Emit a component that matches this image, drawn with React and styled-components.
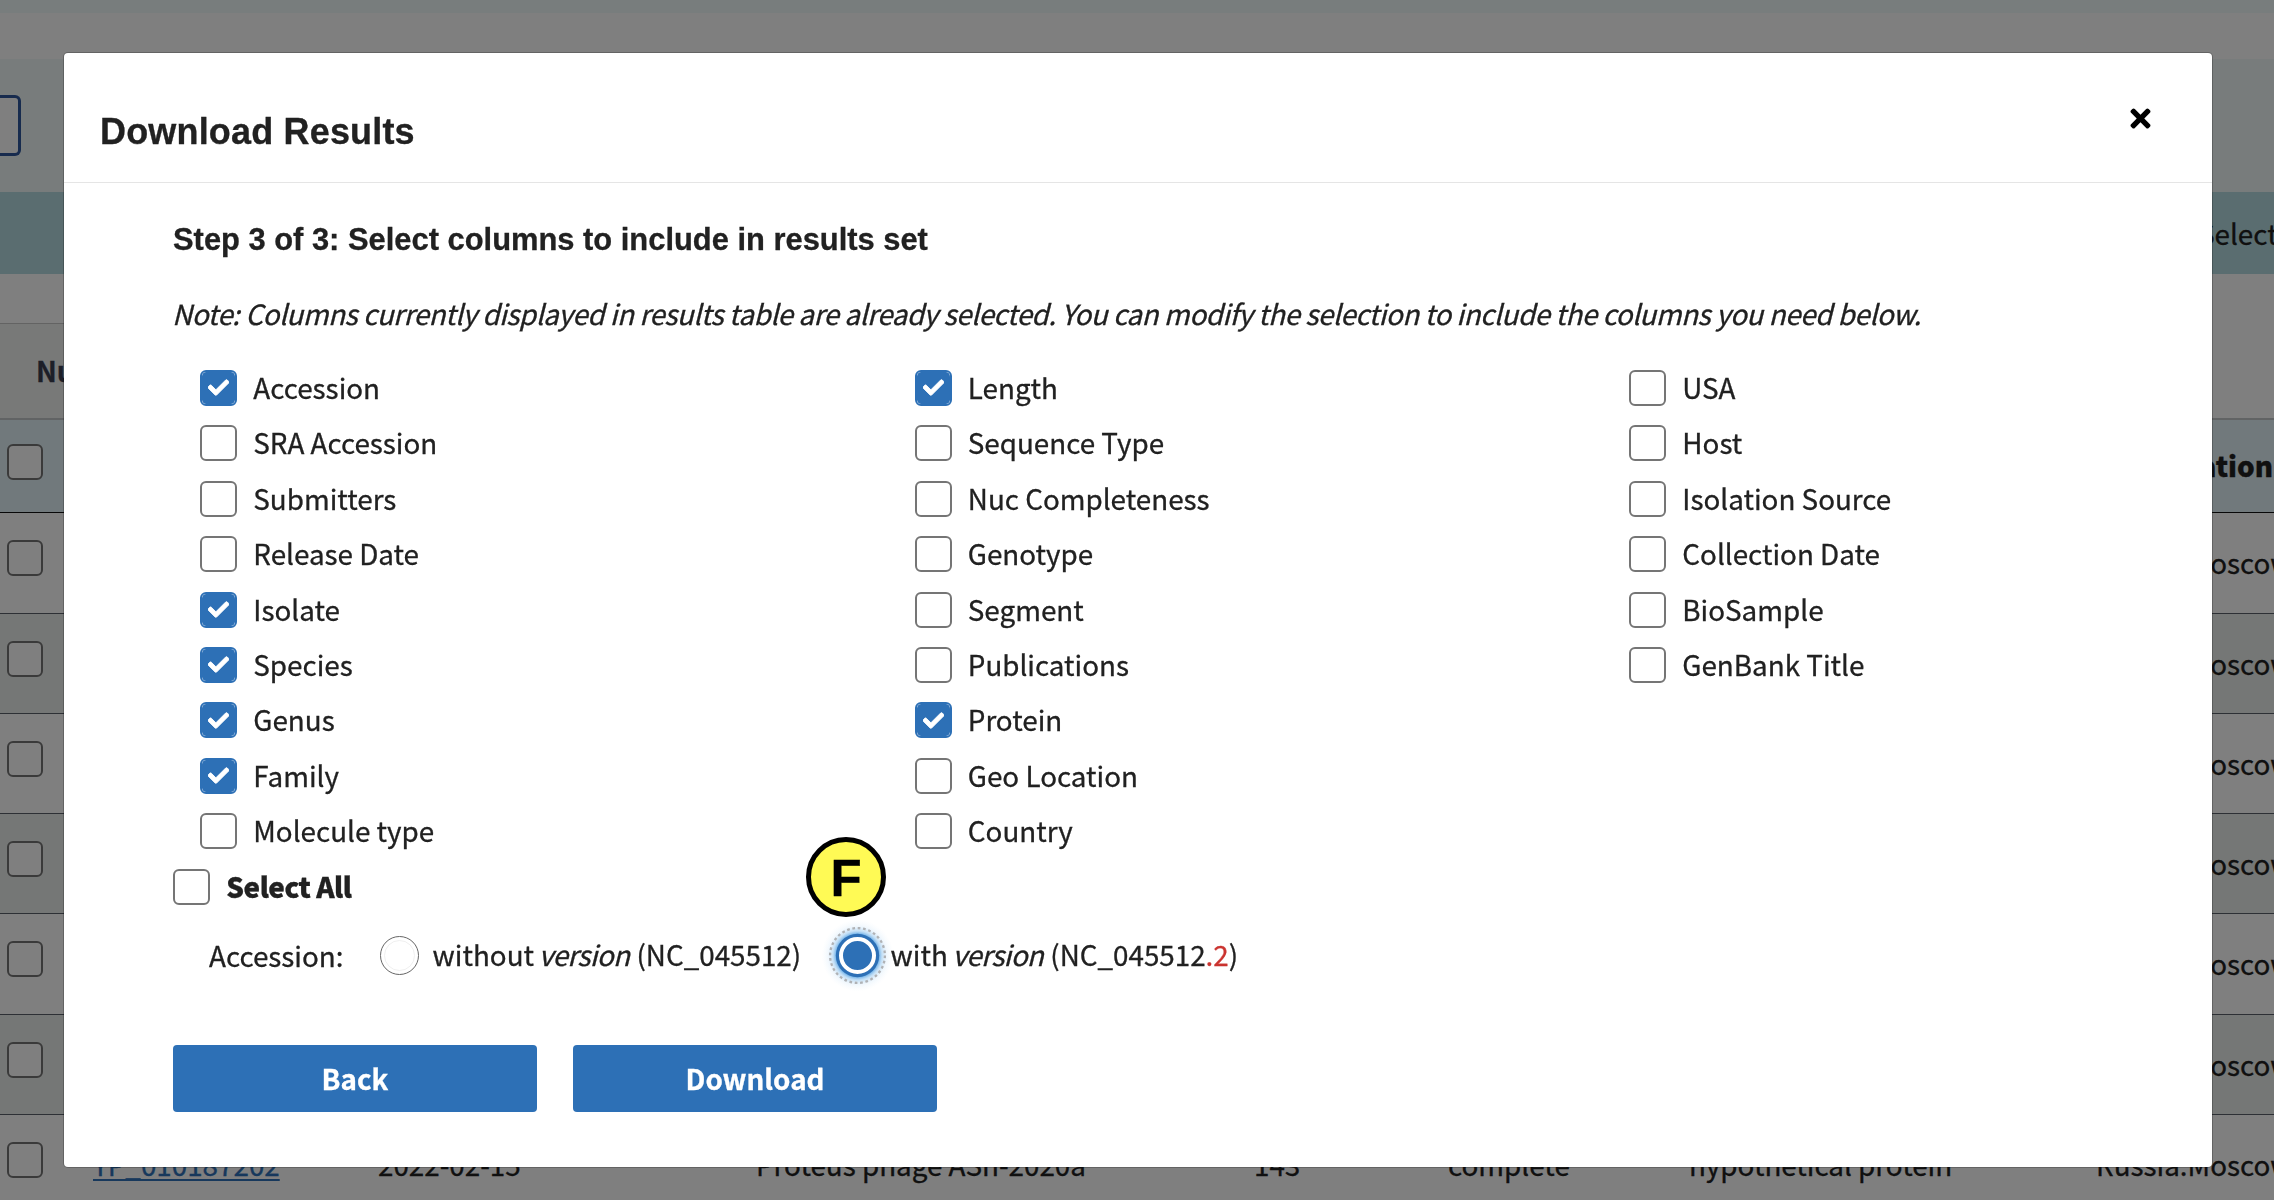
import React, { useState } from 'react';
import styled, { createGlobalStyle, css } from 'styled-components';
import { FaCheck, FaTimes } from 'react-icons/fa';

const blue = '#2d70b6';
const ink = '#212121';
const body = '"Source Sans Pro", "Noto Sans CJK SC", "Noto Sans", sans-serif';
const heading = 'Helvetica, "Liberation Sans", Arial, sans-serif';

const GlobalStyle = createGlobalStyle`
  *, *::before, *::after { box-sizing: border-box; }
  body {
    margin: 0;
    overflow: hidden;
    background: #fff;
    color: ${ink};
    font-family: ${body};
    font-size: 27.8px;
    line-height: 40px;
    -webkit-text-stroke: 0.3px;
  }
  h1, h2, p { margin: 0; }
  button { font: inherit; border: 0; padding: 0; cursor: pointer; }
`;

/* ---------- Page behind the dialog ---------- */

const Page = styled.div`
  display: flex;
  flex-direction: column;
  width: 2274px;
  height: 1200px;
  overflow: hidden;
`;

const Banner = styled.div`
  flex: none;
  height: 13px;
  margin-bottom: 46px;
  background: #f1fafa;
`;

const SearchStrip = styled.div`
  flex: none;
  display: flex;
  align-items: flex-start;
  height: 133px;
  padding-top: 36px;
  background: #f1f9f9;
`;

const SearchField = styled.div`
  width: 21px;
  height: 61px;
  background: #fff;
  border: 3px solid #2e569c;
  border-left: 0;
  border-radius: 0 6px 6px 0;
`;

const ActionBar = styled.div`
  flex: none;
  display: flex;
  justify-content: flex-end;
  height: 82px;
  margin-bottom: 49px;
  padding: 21px 0 0;
  background: #b5dae0;
  white-space: nowrap;
`;

const ActionLabel = styled.span`
  width: 76px;
`;

const TabBar = styled.div`
  flex: none;
  display: flex;
  height: 97px;
  border-bottom: 2px solid #c3c6c8;
`;

const Tab = styled.div`
  width: 360px;
  padding: 26px 0 0 36px;
  border-top: 1px solid #c6c6c6;
  background: #f0f2f0;
  color: #3b3f50;
  font-weight: 700;
`;

const Row = styled.div`
  flex: none;
  display: grid;
  grid-template-columns: 93px 286px 378px 498px 194px 241px 407px 177px;
  height: 100.25px;
  padding-top: 29px;
  border-bottom: 1px solid #5b616b;
  background: ${(p) => (p.$striped ? '#ebefec' : '#fff')};
  white-space: nowrap;
  ${(p) =>
    p.$head &&
    css`
      height: 93.3px;
      padding-top: 24px;
      border-bottom-color: #111;
      background: #e3f2f8;
      font-weight: 900;
    `}
`;

const RowCheck = styled.span`
  display: block;
  width: 36px;
  height: 36px;
  margin: ${(p) => (p.$head ? '0' : '-2px')} 0 0 7px;
  border: 2px solid #757575;
  border-radius: 6px;
  background: #fff;
`;

const Cell = styled.span`
  grid-column: ${(p) => p.$col};
  margin-left: -1px;
`;

const HeadCell = styled.span`
  grid-column: 7 / 9;
  margin-top: 1px;
  padding-right: 1px;
  text-align: right;
`;

const Link = styled.a`
  grid-column: 2;
  color: #2e71b8;
  text-decoration: underline;
  text-decoration-thickness: 2px;
  text-underline-offset: 3px;
`;

/* ---------- Dialog ---------- */

const Overlay = styled.div`
  position: fixed;
  inset: 0;
  display: flex;
  align-items: flex-start;
  padding: 53px 0 0 64px;
  background: rgba(0, 0, 0, 0.5);
`;

const Dialog = styled.section`
  position: relative;
  width: 2148px;
  height: 1114px;
  border-radius: 4px;
  background: #fff;
  box-shadow: 0 0 0 1px rgba(0, 0, 0, 0.22);
`;

const DialogHeader = styled.header`
  display: flex;
  justify-content: space-between;
  height: 130px;
  padding: 57px 57px 0 36px;
  border-bottom: 1px solid #e5e5e5;
`;

const Title = styled.h1`
  padding-top: 1px;
  font: 700 36px/42px ${heading};
  letter-spacing: 0.17px;
`;

const CloseButton = styled.button`
  display: flex;
  width: 29px;
  height: 29px;
  margin-top: -6px;
  background: none;
  color: #000;
  font-size: 29px;
`;

const DialogBody = styled.div`
  padding: 39px 109px 0;
`;

const StepTitle = styled.h2`
  font: 700 30.88px/36px ${heading};
`;

const Note = styled.p`
  margin: 35px 0 0 -1px;
  font-style: italic;
  letter-spacing: -0.44px;
  white-space: nowrap;
`;

const Columns = styled.div`
  display: grid;
  grid-template-columns: repeat(3, 714.5px);
  margin-top: 26.3px;
  padding-left: 27px;
`;

const Column = styled.div`
  display: flex;
  flex-direction: column;
`;

const Option = styled.label`
  display: flex;
  align-items: center;
  height: 55.4px;
  gap: 16.3px;
  white-space: nowrap;
  ${(p) =>
    p.$strong &&
    css`
      font-weight: 900;
      letter-spacing: -0.5px;
    `}
`;

const Box = styled.span`
  flex: none;
  display: flex;
  width: 37px;
  height: 36px;
  margin-top: 2px;
  border: 2px solid ${(p) => (p.$on ? blue : '#757575')};
  border-radius: 6px;
  background: #fff;
  color: #fff;
  font-size: 21px;
  & svg path {
    stroke: #fff;
    stroke-width: 22px;
    stroke-linejoin: round;
  }
`;

const BoxFill = styled.span`
  flex: 1;
  display: flex;
  align-items: center;
  justify-content: center;
  border-radius: 4.4px;
  background: ${blue};
`;

const VersionRow = styled.div`
  display: flex;
  align-items: center;
  height: 85.4px;
  padding-left: 36px;
  white-space: nowrap;
`;

const VersionLabel = styled.span`
  width: 171px;
  padding-bottom: 1px;
`;

const VersionText = styled.span`
  width: ${(p) => p.$width}px;
  margin-left: ${(p) => p.$gap}px;
  padding-bottom: 3px;
`;

const Em = styled.em`
  margin-left: -1.5px;
  margin-right: 0.8px;
  letter-spacing: -0.6px;
`;

const Suffix = styled.span`
  color: #cb3430;
`;

const Radio = styled.svg`
  flex: none;
  width: 39px;
  height: 39px;
  overflow: visible;
`;

const Actions = styled.div`
  display: flex;
  gap: 36px;
  margin-top: 46.3px;
`;

const ActionButton = styled.button`
  width: 364px;
  height: 67px;
  border-radius: 4px;
  background: ${blue};
  color: #fff;
  font-weight: 700;
`;

const Badge = styled.span`
  position: absolute;
  left: 742px;
  top: 784px;
  width: 80px;
  height: 80px;
  border: 5px solid #000;
  border-radius: 50%;
  background: #fffa55;
  color: #000;
  font: 700 51px/74px ${heading};
  text-align: center;
`;

const FIELD_COLUMNS = [
  ['Accession', 'SRA Accession', 'Submitters', 'Release Date', 'Isolate', 'Species', 'Genus', 'Family', 'Molecule type'],
  ['Length', 'Sequence Type', 'Nuc Completeness', 'Genotype', 'Segment', 'Publications', 'Protein', 'Geo Location', 'Country'],
  ['USA', 'Host', 'Isolation Source', 'Collection Date', 'BioSample', 'GenBank Title'],
];

const DEFAULT_FIELDS = ['Accession', 'Isolate', 'Species', 'Genus', 'Family', 'Length', 'Protein'];

function Checkbox({ checked }) {
  return (
    <Box $on={checked}>
      {checked && (
        <BoxFill>
          <FaCheck />
        </BoxFill>
      )}
    </Box>
  );
}

function RadioMark({ checked, onClick }) {
  if (!checked) {
    return (
      <Radio viewBox="0 0 39 39" onClick={onClick}>
        <circle cx="19.5" cy="19.5" r="19" fill="#fff" stroke="#666" strokeWidth="1" />
        <circle cx="19.5" cy="19.5" r="15" fill="none" stroke="#f0f0f0" strokeWidth="1" />
      </Radio>
    );
  }
  return (
    <Radio viewBox="0 0 39 39" onClick={onClick}>
      <defs>
        <radialGradient id="glow">
          <stop offset="0.58" stopColor="#3a94e0" stopOpacity="0.8" />
          <stop offset="0.68" stopColor="#6fb2e8" stopOpacity="0.42" />
          <stop offset="0.82" stopColor="#9fcdf2" stopOpacity="0.14" />
          <stop offset="1" stopColor="#c8e2f8" stopOpacity="0" />
        </radialGradient>
      </defs>
      <circle cx="19.5" cy="19.5" r="36" fill="url(#glow)" />
      <circle cx="19.5" cy="19.5" r="27.4" fill="none" stroke="#b0b2b5" strokeWidth="2.3" strokeDasharray="2.7 2.68" />
      <circle cx="19.5" cy="19.5" r="21.7" fill={blue} />
      <circle cx="19.5" cy="19.5" r="16.5" fill={blue} stroke="#fff" strokeWidth="4" />
    </Radio>
  );
}

const BODY_ROWS = [0, 1, 2, 3, 4, 5];

export default function App() {
  const [selected, setSelected] = useState(DEFAULT_FIELDS);
  const [versioned, setVersioned] = useState(true);
  const all = FIELD_COLUMNS.flat();
  const toggle = (name) =>
    setSelected((s) => (s.includes(name) ? s.filter((n) => n !== name) : [...s, name]));

  return (
    <>
      <GlobalStyle />
      <Page>
        <Banner />
        <SearchStrip>
          <SearchField />
        </SearchStrip>
        <ActionBar>
          <ActionLabel>Select</ActionLabel>
        </ActionBar>
        <TabBar>
          <Tab>Nuc</Tab>
        </TabBar>
        <Row $head>
          <RowCheck $head />
          <HeadCell>Location</HeadCell>
        </Row>
        {BODY_ROWS.map((n) => (
          <Row key={n} $striped={n % 2 === 1}>
            <RowCheck />
            <Cell $col={8}>Russia:Moscow</Cell>
          </Row>
        ))}
        <Row>
          <RowCheck />
          <Link>YP_010187202</Link>
          <Cell $col={3}>2022-02-15</Cell>
          <Cell $col={4}>Proteus phage ASh-2020a</Cell>
          <Cell $col={5}>143</Cell>
          <Cell $col={6}>complete</Cell>
          <Cell $col={7}>hypothetical protein</Cell>
          <Cell $col={8}>Russia:Moscow</Cell>
        </Row>
      </Page>

      <Overlay>
        <Dialog role="dialog" aria-modal="true">
          <DialogHeader>
            <Title>Download Results</Title>
            <CloseButton>
              <FaTimes />
            </CloseButton>
          </DialogHeader>
          <DialogBody>
            <StepTitle>Step 3 of 3: Select columns to include in results set</StepTitle>
            <Note>
              Note: Columns currently displayed in results table are already selected. You can modify the
              selection to include the columns you need below.
            </Note>
            <Columns>
              {FIELD_COLUMNS.map((names, i) => (
                <Column key={i}>
                  {names.map((name) => (
                    <Option key={name} onClick={() => toggle(name)}>
                      <Checkbox checked={selected.includes(name)} />
                      {name}
                    </Option>
                  ))}
                </Column>
              ))}
            </Columns>
            <Option $strong onClick={() => setSelected(selected.length === all.length ? [] : all)}>
              <Checkbox checked={selected.length === all.length} />
              Select All
            </Option>
            <VersionRow>
              <VersionLabel>Accession:</VersionLabel>
              <RadioMark checked={!versioned} onClick={() => setVersioned(false)} />
              <VersionText $gap={13.5} $width={405.5}>
                without <Em>version</Em> (NC_045512)
              </VersionText>
              <RadioMark checked={versioned} onClick={() => setVersioned(true)} />
              <VersionText $gap={13.5} $width={360}>
                with <Em>version</Em> (NC_045512<Suffix>.2</Suffix>)
              </VersionText>
            </VersionRow>
            <Actions>
              <ActionButton>Back</ActionButton>
              <ActionButton>Download</ActionButton>
            </Actions>
          </DialogBody>
          <Badge>F</Badge>
        </Dialog>
      </Overlay>
    </>
  );
}
